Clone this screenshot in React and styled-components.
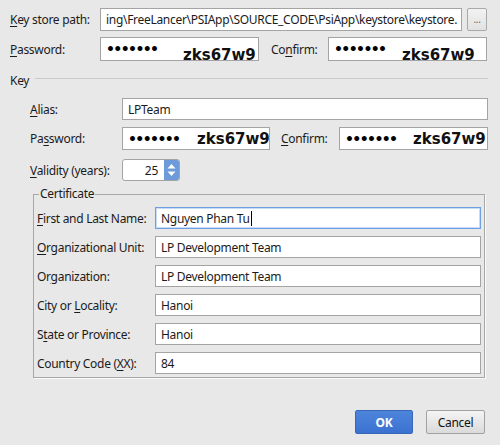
import React from "react";
import styled, { createGlobalStyle, css } from "styled-components";

const GlobalStyle = createGlobalStyle`
  html, body {
    margin: 0;
    padding: 0;
    background: #e8e8e8;
  }
  body {
    font-family: "Segoe UI", "Noto Sans", sans-serif;
    font-size: 12px;
    letter-spacing: -0.3px;
    color: #1b1b1b;
  }
`;

const Dialog = styled.div`
  box-sizing: border-box;
  width: 500px;
  height: 445px;
  display: flex;
  flex-direction: column;
  padding: 8px 13px 11px 10px;
`;

const Row = styled.div`
  display: flex;
  align-items: stretch;
  height: ${(p) => p.$h || 22}px;
  margin-top: ${(p) => p.$mt || 0}px;
  flex-shrink: 0;
`;

const Label = styled.div`
  width: ${(p) => p.$w}px;
  margin-left: ${(p) => p.$ml || 0}px;
  flex-shrink: 0;
  display: flex;
  align-items: center;
  white-space: nowrap;
`;

const Mn = styled.span`
  text-decoration: underline;
  text-underline-offset: 2px;
`;

const Field = styled.div`
  position: relative;
  box-sizing: border-box;
  background: #fff;
  border: 1px solid #a4a4a4;
  padding: 0 5px;
  display: flex;
  align-items: center;
  overflow: hidden;
  white-space: nowrap;
  ${(p) => (p.$w ? `width: ${p.$w}px; flex-shrink: 0;` : "flex: 1; min-width: 0;")}
  ${(p) =>
    p.$focused &&
    css`
      border-color: #6e9fe2;
      box-shadow: inset 0 0 0 1px #c6dbf6;
    `}
`;

const Caret = styled.span`
  display: inline-block;
  width: 1px;
  height: 15px;
  margin-left: 1px;
  background: #000;
`;

const Dots = styled.span`
  font-family: "DejaVu Sans", sans-serif;
  font-weight: bold;
  font-size: 14px;
  letter-spacing: -1.6px;
  color: #000;
  line-height: 1;
`;

const Annot = styled.span`
  position: absolute;
  left: ${(p) => p.$x}px;
  top: ${(p) => p.$y}px;
  font-family: "DejaVu Sans", sans-serif;
  font-weight: bold;
  font-size: 15px;
  line-height: 15px;
  letter-spacing: 0;
  color: #111;
`;

const BrowseButton = styled.div`
  box-sizing: border-box;
  width: 20px;
  margin-left: 5px;
  flex-shrink: 0;
  border: 1px solid #a9a9a9;
  border-radius: 2px;
  background: linear-gradient(#f2f2f2, #e2e2e2);
  display: flex;
  align-items: center;
  justify-content: center;
  font-size: 10px;
  color: #666;
  padding-bottom: 2px;
`;

const Separator = styled.div`
  display: flex;
  align-items: center;
  height: 16px;
  margin-top: 11px;
  margin-right: -1px;
  flex-shrink: 0;
`;

const SepLine = styled.div`
  flex: 1;
  margin-left: 6px;
  margin-top: -3px;
  border-top: 1px solid #c9c9c9;
`;

const KeySection = styled.div`
  display: flex;
  flex-direction: column;
  padding-left: 20px;
  margin-right: -1px;
`;

const Spinner = styled.div`
  box-sizing: border-box;
  width: 58px;
  display: flex;
  border: 1px solid #a4a4a4;
  border-radius: 3px;
  background: #fff;
  overflow: hidden;
`;

const SpinValue = styled.div`
  flex: 1;
  display: flex;
  align-items: center;
  justify-content: flex-end;
  padding-right: 6px;
`;

const SpinArrows = styled.div`
  width: 15px;
  background: #6d9ad9;
  display: flex;
  align-items: center;
  justify-content: center;
`;

const Group = styled.div`
  position: relative;
  margin: 13px 2px 0 23px;
  border: 1px solid #a7a7a7;
  box-shadow: 1px 1px 0 #fafafa;
  padding: 12px 3px 3px 3px;
  display: flex;
  flex-direction: column;
  gap: 7px;
`;

const Legend = styled.div`
  position: absolute;
  top: -9px;
  left: 5px;
  padding: 0 1px;
  background: #e8e8e8;
  line-height: 16px;
`;

const Footer = styled.div`
  margin-top: auto;
  margin-right: 2px;
  display: flex;
  justify-content: flex-end;
  gap: 13px;
`;

const Button = styled.div`
  box-sizing: border-box;
  width: ${(p) => p.$w}px;
  height: 24px;
  border-radius: 2px;
  display: flex;
  align-items: center;
  justify-content: center;
  ${(p) =>
    p.$primary
      ? css`
          background: linear-gradient(#4d85dc, #3b72d1);
          border: 1px solid #3a68b8;
          color: #fff;
          font-weight: bold;
        `
      : css`
          background: linear-gradient(#f4f4f4, #dadada);
          border: 1px solid #a2a2a2;
          color: #111;
        `}
`;

const certRows = [
  { pre: "", mn: "F", post: "irst and Last Name:", value: "Nguyen Phan Tu", focused: true },
  { pre: "", mn: "O", post: "rganizational Unit:", value: "LP Development Team" },
  { pre: "Or", mn: "g", post: "anization:", value: "LP Development Team" },
  { pre: "City or ", mn: "L", post: "ocality:", value: "Hanoi" },
  { pre: "S", mn: "t", post: "ate or Province:", value: "Hanoi" },
  { pre: "Country Code (", mn: "X", post: "X):", value: "84" },
];

const PASS = "•••••••";

export default function App() {
  return (
    <>
      <GlobalStyle />
      <Dialog>
        <Row $h={23}>
          <Label $w={90}>
            <span>
              <Mn>K</Mn>ey store path:
            </span>
          </Label>
          <Field>ing\FreeLancer\PSIApp\SOURCE_CODE\PsiApp\keystore\keystore.</Field>
          <BrowseButton>...</BrowseButton>
        </Row>
        <Row $h={24} $mt={6}>
          <Label $w={90}>
            <span>
              <Mn>P</Mn>assword:
            </span>
          </Label>
          <Field $w={159}>
            <Dots>{PASS}</Dots>
            <Annot $x={82} $y={10}>zks67w9</Annot>
          </Field>
          <Label $w={57} $ml={12}>
            <span>
              Co<Mn>n</Mn>firm:
            </span>
          </Label>
          <Field>
            <Dots>{PASS}</Dots>
            <Annot $x={73} $y={10}>zks67w9</Annot>
          </Field>
        </Row>

        <Separator>
          <span>Key</span>
          <SepLine />
        </Separator>

        <KeySection>
          <Row $mt={10}>
            <Label $w={92}>
              <span>
                <Mn>A</Mn>lias:
              </span>
            </Label>
            <Field>LPTeam</Field>
          </Row>
          <Row $h={23} $mt={7}>
            <Label $w={92}>
              <span>
                Pa<Mn>s</Mn>sword:
              </span>
            </Label>
            <Field $w={148}>
              <Dots>{PASS}</Dots>
              <Annot $x={74} $y={4}>zks67w9</Annot>
            </Field>
            <Label $w={58} $ml={11}>
              <span>
                <Mn>C</Mn>onfirm:
              </span>
            </Label>
            <Field>
              <Dots>{PASS}</Dots>
              <Annot $x={73} $y={4}>zks67w9</Annot>
            </Field>
          </Row>
          <Row $mt={9}>
            <Label $w={92}>
              <span>
                <Mn>V</Mn>alidity (years):
              </span>
            </Label>
            <Spinner>
              <SpinValue>25</SpinValue>
              <SpinArrows>
                <svg width="9" height="14" viewBox="0 0 9 14">
                  <path d="M4.5 1 L8.5 5.5 H0.5 Z" fill="#fff" />
                  <path d="M4.5 13 L8.5 8.5 H0.5 Z" fill="#fff" />
                </svg>
              </SpinArrows>
            </Spinner>
          </Row>
        </KeySection>

        <Group>
          <Legend>Certificate</Legend>
          {certRows.map((r) => (
            <Row key={r.post}>
              <Label $w={118}>
                <span>
                  {r.pre}
                  <Mn>{r.mn}</Mn>
                  {r.post}
                </span>
              </Label>
              <Field $focused={r.focused}>
                {r.value}
                {r.focused && <Caret />}
              </Field>
            </Row>
          ))}
        </Group>

        <Footer>
          <Button $primary $w={58}>OK</Button>
          <Button $w={59}>Cancel</Button>
        </Footer>
      </Dialog>
    </>
  );
}
